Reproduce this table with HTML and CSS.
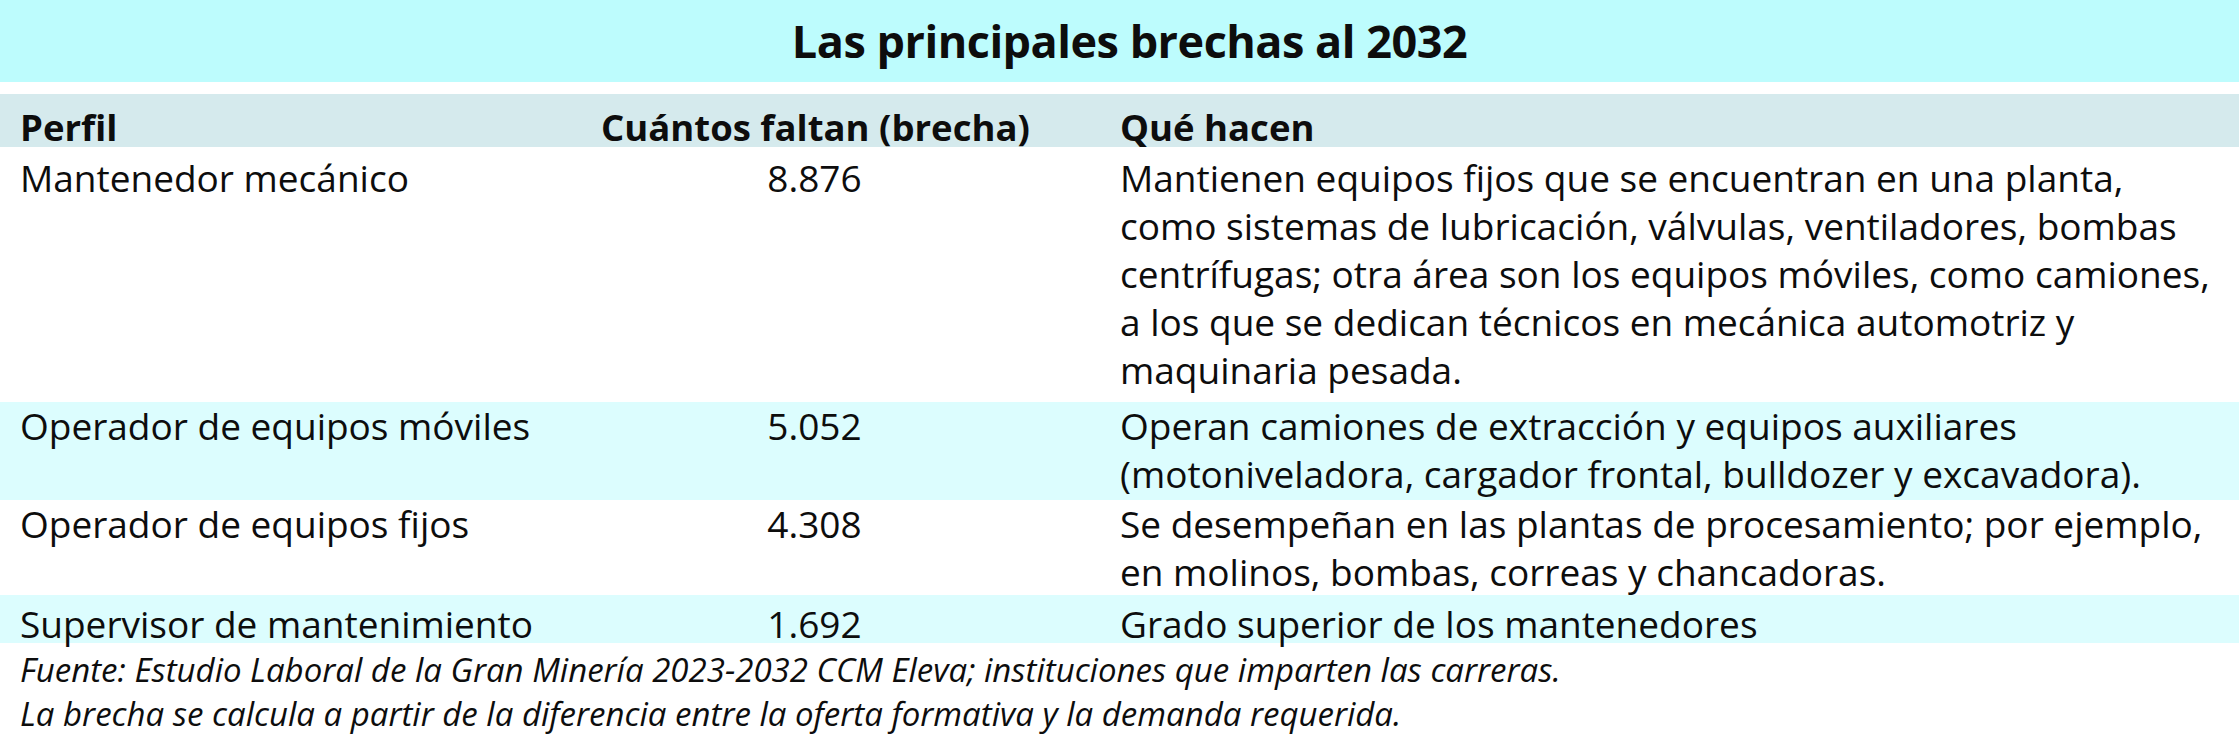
FILE: index.html
```html
<!DOCTYPE html>
<html lang="es">
<head>
<meta charset="utf-8">
<title>Las principales brechas al 2032</title>
<link rel="stylesheet" href="styles.css">
</head>
<body>
<main class="page">
  <h1 class="title">Las principales brechas al 2032</h1>
  <div class="table">
    <div class="row head">
      <div class="c1">Perfil</div>
      <div class="c2">Cuántos faltan (brecha)</div>
      <div class="c3">Qué hacen</div>
    </div>
    <div class="row r1">
      <div class="c1">Mantenedor mecánico</div>
      <div class="c2">8.876</div>
      <div class="c3">Mantienen equipos fijos que se encuentran en una planta,<br>como sistemas de lubricación, válvulas, ventiladores, bombas<br>centrífugas; otra área son los equipos móviles, como camiones,<br>a los que se dedican técnicos en mecánica automotriz y<br>maquinaria pesada.</div>
    </div>
    <div class="row r2 tint">
      <div class="c1">Operador de equipos móviles</div>
      <div class="c2">5.052</div>
      <div class="c3">Operan camiones de extracción y equipos auxiliares<br>(motoniveladora, cargador frontal, bulldozer y excavadora).</div>
    </div>
    <div class="row r3">
      <div class="c1">Operador de equipos fijos</div>
      <div class="c2">4.308</div>
      <div class="c3">Se desempeñan en las plantas de procesamiento; por ejemplo,<br>en molinos, bombas, correas y chancadoras.</div>
    </div>
    <div class="row r4 tint">
      <div class="c1">Supervisor de mantenimiento</div>
      <div class="c2">1.692</div>
      <div class="c3">Grado superior de los mantenedores</div>
    </div>
  </div>
  <footer class="notes">
    <p>Fuente: Estudio Laboral de la Gran Minería 2023-2032 CCM Eleva; instituciones que imparten las carreras.</p>
    <p>La brecha se calcula a partir de la diferencia entre la oferta formativa y la demanda requerida.</p>
  </footer>
</main>
</body>
</html>
```

FILE: styles.css
```css
html, body {
  margin: 0;
  padding: 0;
  background: #ffffff;
}

body {
  font-family: "Open Sans", "Noto Sans", "Liberation Sans", sans-serif;
  color: #0d0d0d;
  width: 2239px;
  height: 748px;
  overflow: hidden;
}

.page {
  display: flex;
  flex-direction: column;
}

.title {
  margin: 0;
  height: 82px;
  background: #bdfcfd;
  font-size: 45px;
  font-weight: 700;
  letter-spacing: -0.5px;
  line-height: 82px;
  text-align: center;
  padding-left: 20px;
  padding-bottom: 6px;
  box-sizing: border-box;
}

.table {
  margin-top: 12px;
  display: flex;
  flex-direction: column;
}

.row {
  display: grid;
  grid-template-columns: 581px 427px 1fr;
  padding-left: 20px;
  font-size: 37px;
  line-height: 48px;
  white-space: nowrap;
  box-sizing: border-box;
}

.row .c2 {
  text-align: center;
}

.row .c3 {
  padding-left: 92px;
}

.head {
  background: #d5eaed;
  height: 53px;
  padding-top: 15px;
  font-size: 36.5px;
  font-weight: 700;
  letter-spacing: 0;
  line-height: 36px;
}

.tint {
  background: #dcfdfe;
}

.r1 {
  padding-top: 7px;
  padding-bottom: 8px;
}

.r2 {
  padding-bottom: 2px;
}

.r3 {
  height: 95px;
}

.r4 {
  height: 48px;
  padding-top: 5px;
}

.notes {
  padding: 5px 0 0 20px;
  font-size: 33px;
  font-style: italic;
  line-height: 44px;
  white-space: nowrap;
}

.notes p {
  margin: 0;
}
```
